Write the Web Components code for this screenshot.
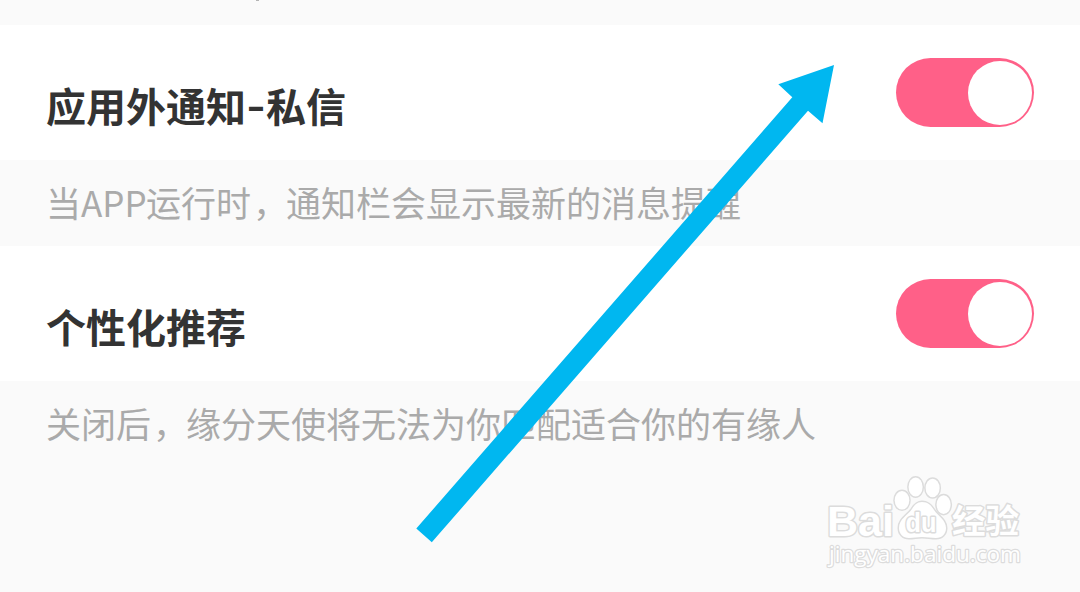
<!DOCTYPE html>
<html lang="zh-CN">
<head>
<meta charset="utf-8">
<title>通知设置</title>
<style>
  body {
    margin: 0;
    background: #fafafa;
    font-family: "Noto Sans CJK SC", sans-serif;
  }
</style>
</head>
<body>
<settings-page>
  <settings-item>
    应用外通知<title-dash>-</title-dash>私信
    <span slot="note">当<latin-word>APP</latin-word>运行时<note-comma>，</note-comma>通知栏会显示最新的消息提醒</span>
  </settings-item>
  <settings-item>
    个性化推荐
    <span slot="note">关闭后<note-comma>，</note-comma>缘分天使将无法为你匹配适合你的有缘人</span>
  </settings-item>
  <pointer-arrow slot="overlay"></pointer-arrow>
  <site-watermark slot="overlay"></site-watermark>
</settings-page>

<script>
class SettingsPage extends HTMLElement {
  constructor() {
    super();
    this.attachShadow({ mode: 'open' });
    this.shadowRoot.innerHTML = `
      <style>
        :host {
          display: flex;
          flex-direction: column;
          position: relative;
          width: 1080px;
          height: 592px;
          overflow: hidden;
          background: #fafafa;
        }

        /* end of the section scrolled off the top */
        .previous {
          height: 25px;
          flex: none;
        }

        .tail {
          width: 3px;
          height: 1px;
          margin-left: 256px;
          background: #b4b4b4;
        }
      </style>
      <div class="previous"><div class="tail"></div></div>
      <slot></slot>
      <slot name="overlay"></slot>
    `;
  }
}

class SettingsItem extends HTMLElement {
  constructor() {
    super();
    this.attachShadow({ mode: 'open' });
    this.shadowRoot.innerHTML = `
      <style>
        :host {
          display: block;
        }

        .row {
          display: flex;
          justify-content: space-between;
          align-items: center;
          box-sizing: border-box;
          height: 135px;
          padding: 0 46px;
          background: #fff;
        }

        .title {
          padding-top: 25px;
          font-size: 40px;
          line-height: 60px;
          font-weight: 700;
          color: #333;
          white-space: nowrap;
        }

        .note {
          box-sizing: border-box;
          height: 86px;
          padding: 17px 46px;
          font-size: 35px;
          line-height: 50px;
          color: #aaa;
          white-space: nowrap;
        }
      </style>
      <div class="row">
        <div class="title"><slot></slot></div>
        <toggle-switch></toggle-switch>
      </div>
      <div class="note"><slot name="note"></slot></div>
    `;
  }
}

class TitleDash extends HTMLElement {
  constructor() {
    super();
    this.attachShadow({ mode: 'open' });
    this.shadowRoot.innerHTML = `
      <style>
        :host {
          display: inline-block;
          width: 20px;
          text-align: center;
          transform: translateY(-2px) scaleX(1.28);
        }
      </style>
      <slot></slot>
    `;
  }
}

class LatinWord extends HTMLElement {
  constructor() {
    super();
    this.attachShadow({ mode: 'open' });
    this.shadowRoot.innerHTML = `
      <style>
        :host {
          display: inline-block;
          width: 65px;
        }
      </style>
      <slot></slot>
    `;
  }
}

class NoteComma extends HTMLElement {
  constructor() {
    super();
    this.attachShadow({ mode: 'open' });
    this.shadowRoot.innerHTML = `
      <style>
        :host {
          display: inline-block;
          width: 35px;
          transform: translateX(2px);
        }
      </style>
      <slot></slot>
    `;
  }
}

class ToggleSwitch extends HTMLElement {
  constructor() {
    super();
    this.attachShadow({ mode: 'open' });
    this.shadowRoot.innerHTML = `
      <style>
        :host {
          display: flex;
          justify-content: flex-end;
          align-items: center;
          box-sizing: border-box;
          width: 138px;
          height: 69px;
          padding-right: 2px;
          border-radius: 35px;
          background: #ff6088;
        }

        .knob {
          width: 64px;
          height: 64px;
          border-radius: 50%;
          background: #fff;
        }
      </style>
      <div class="knob"></div>
    `;
  }
}

class PointerArrow extends HTMLElement {
  constructor() {
    super();
    this.attachShadow({ mode: 'open' });
    this.shadowRoot.innerHTML = `
      <style>
        :host {
          display: block;
          position: absolute;
          left: 416px;
          top: 65px;
        }

        svg {
          display: block;
        }
      </style>
      <svg width="420" height="480" viewBox="416 65 420 480">
        <path fill="#00b7f0" d="M834 65 778.3 84.2 792.3 97.3 416.3 528.5 431.8 542.3 808 110.7 822.5 123.3Z"/>
      </svg>
    `;
  }
}

class SiteWatermark extends HTMLElement {
  constructor() {
    super();
    this.attachShadow({ mode: 'open' });
    this.shadowRoot.innerHTML = `
      <style>
        :host {
          display: block;
          position: absolute;
          left: 820px;
          top: 470px;
        }

        svg {
          display: block;
        }

        text, .paw {
          fill: #fff;
          stroke: #dcdcdc;
          stroke-width: 3px;
          stroke-linejoin: round;
          paint-order: stroke;
        }

        .brand {
          font: 700 43px "Liberation Sans", sans-serif;
        }

        .du {
          font: 700 27px "Liberation Sans", sans-serif;
        }

        .cn {
          font: 700 33px "Noto Sans CJK SC", sans-serif;
        }

        .url {
          font: 400 22px "Open Sans", sans-serif;
          stroke-width: 2.4px;
        }
      </style>
      <svg width="210" height="105" viewBox="820 470 210 105">
        <text class="brand" x="827" y="536" textLength="67" lengthAdjust="spacingAndGlyphs">Bai</text>
        <g class="paw">
          <ellipse cx="902" cy="500.3" rx="7.3" ry="9.3"/>
          <ellipse cx="915.6" cy="487" rx="7" ry="9.5"/>
          <ellipse cx="932.6" cy="488" rx="7" ry="9.3"/>
          <ellipse cx="943.6" cy="504.6" rx="7" ry="9.3"/>
          <path d="M922 502c-5 0-7.500 3-10 7-4 6-13 10-13 19 0 6 4 10 10 10 5 0 8-1 13-1s9 1 14 1c6 0 10-4 10-10 0-8-8-12-12-18-3-5-6-8-12-8z"/>
        </g>
        <text class="du" x="905.500" y="532" textLength="31" lengthAdjust="spacingAndGlyphs">du</text>
        <text class="cn" x="952" y="533" textLength="67" lengthAdjust="spacingAndGlyphs">经验</text>
        <text class="url" x="829" y="562" textLength="192" lengthAdjust="spacingAndGlyphs">jingyan.baidu.com</text>
      </svg>
    `;
  }
}

customElements.define('settings-page', SettingsPage);
customElements.define('settings-item', SettingsItem);
customElements.define('title-dash', TitleDash);
customElements.define('latin-word', LatinWord);
customElements.define('note-comma', NoteComma);
customElements.define('toggle-switch', ToggleSwitch);
customElements.define('pointer-arrow', PointerArrow);
customElements.define('site-watermark', SiteWatermark);
</script>
</body>
</html>
